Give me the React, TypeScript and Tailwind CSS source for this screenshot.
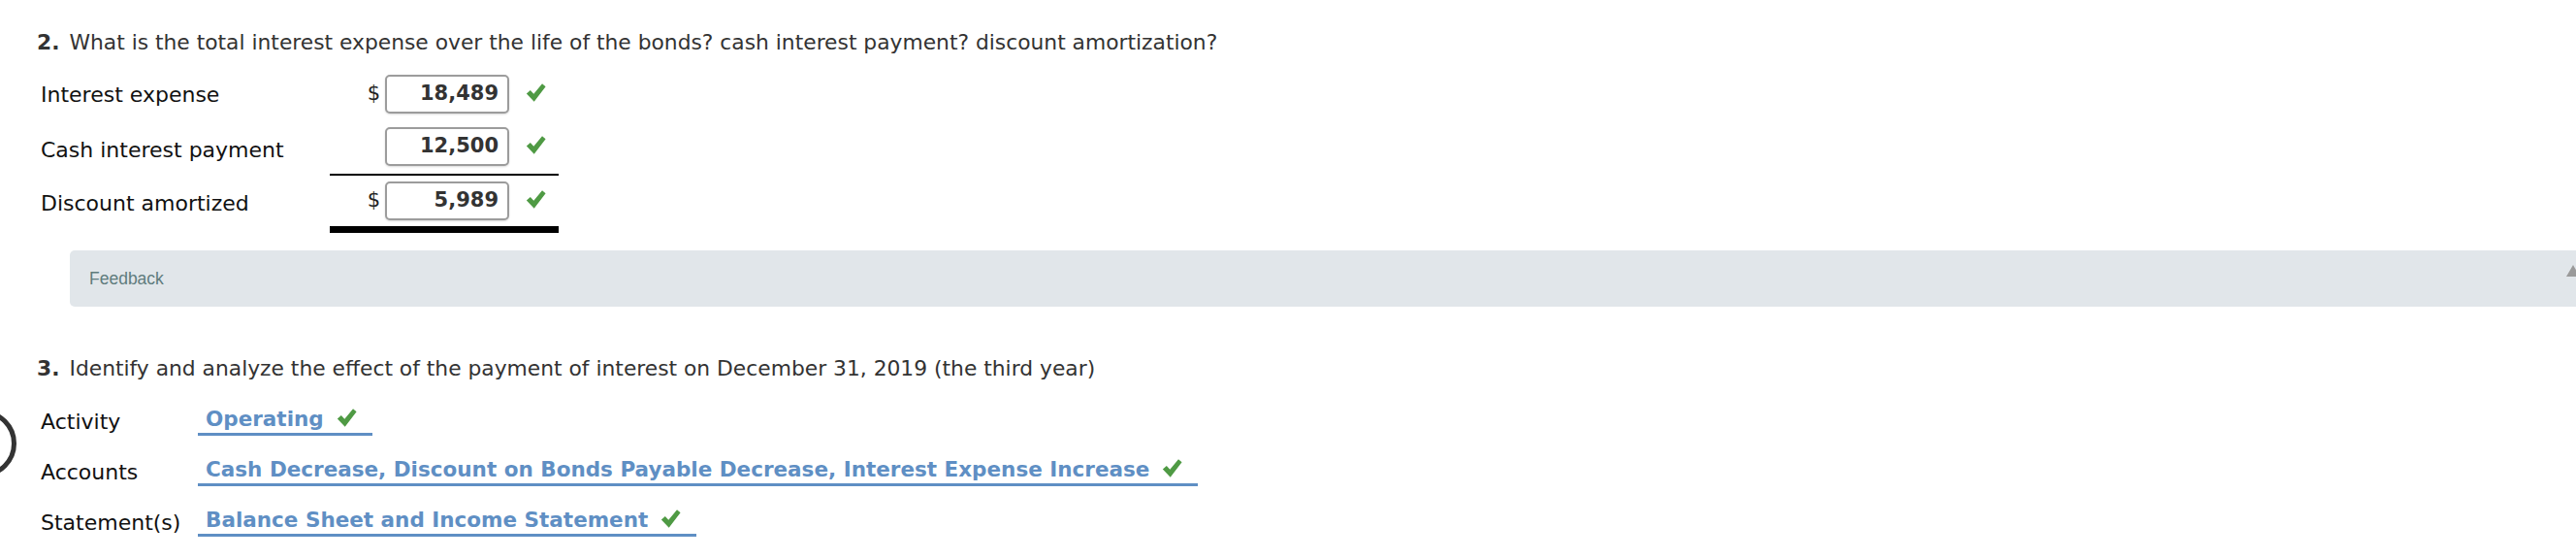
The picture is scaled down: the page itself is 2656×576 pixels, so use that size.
import React from 'react';

const font = "font-['DejaVu_Sans','Verdana',sans-serif]";

function Check({ className = '' }: { className?: string }) {
  return (
    <svg viewBox="0 0 20 20" className={`w-[21px] h-[21px] shrink-0 ${className}`}>
      <path d="M0.8 11 L4.6 7.6 L7.9 11.2 L16.2 1.2 L19.6 4 L8.3 18.8 Z" fill="#4f9a44" />
    </svg>
  );
}

type AmountRow = { label: string; value: string; dollar: boolean; line?: 'thin' | 'thick' };

const amounts: AmountRow[] = [
  { label: 'Interest expense', value: '18,489', dollar: true },
  { label: 'Cash interest payment', value: '12,500', dollar: false, line: 'thin' },
  { label: 'Discount amortized', value: '5,989', dollar: true, line: 'thick' },
];

const effects = [
  { label: 'Activity', value: 'Operating' },
  { label: 'Accounts', value: 'Cash Decrease, Discount on Bonds Payable Decrease, Interest Expense Increase' },
  { label: 'Statement(s)', value: 'Balance Sheet and Income Statement' },
];

function Amount({ row, index }: { row: AmountRow; index: number }) {
  // spacing per row: top margin, cell padding and label offset
  const outer = index === 0 ? 'mt-[15px]' : index === 1 ? 'mt-[6px]' : 'mt-0';
  const cell =
    row.line === 'thin'
      ? 'pt-[4px] pb-[8px] border-b-2 border-black'
      : row.line === 'thick'
        ? 'pt-[6px] pb-[6px] border-b-[7px] border-black'
        : 'pt-[4px] pb-[4px]';
  const labelTop = index === 0 ? 'mt-[4px]' : index === 1 ? 'mt-[7px]' : 'mt-[8px]';
  return (
    <div className={`flex items-start ${outer}`}>
      <div className={`w-[302px] pl-[4px] h-[40px] flex items-center text-[22px] text-[#111] ${labelTop}`}>
        {row.label}
      </div>
      <div className={`w-[236px] flex items-center ${cell}`}>
        <span className="w-[57px] pr-[5px] text-right text-[21px] text-[#222]">{row.dollar ? '$' : ''}</span>
        <div className="w-[128px] h-[40px] rounded-[5px] border-2 border-[#9c9c9c] shadow-[0_1px_2px_rgba(0,0,0,0.15)] bg-white flex items-center justify-end pr-[9px] text-[21px] font-bold text-[#333]">
          {row.value}
        </div>
        <Check className="ml-[17px] -mt-[4px]" />
      </div>
    </div>
  );
}

export default function App() {
  return (
    <div className={`relative w-[2656px] h-[576px] overflow-hidden bg-white ${font}`}>
      <div className="absolute left-[-55px] top-[422px] w-[72px] h-[70px] rounded-full border-[5px] border-[#333]" />

      <div className="pl-[38px] pt-[30px]">
        <p className="text-[21.8px] leading-[28px] text-[#333]">
          <span className="font-bold mr-[10px]">2.</span>What is the total interest expense over the life of the bonds? cash
          interest payment? discount amortization?
        </p>

        {amounts.map((r, i) => (
          <Amount key={r.label} row={r} index={i} />
        ))}
      </div>

      <div className="relative mt-[18px] ml-[72px] w-[2620px] h-[58px] rounded-[5px] bg-[#e1e6ea] flex items-center pl-[20px]">
        <span className="font-['Liberation_Sans',Arial,sans-serif] text-[17.5px] text-[#5f7c7d]">Feedback</span>
        <svg viewBox="0 0 14 12" className="absolute left-[2574px] top-[15px] w-[14px] h-[12px]">
          <path d="M0 12 L7 0 L14 12 Z" fill="#9a9a9a" />
        </svg>
      </div>

      <div className="pl-[38px] pt-[50px]">
        <p className="text-[21.8px] leading-[28px] text-[#333]">
          <span className="font-bold mr-[10px]">3.</span>Identify and analyze the effect of the payment of interest on
          December 31, 2019 (the third year)
        </p>

        <div className="mt-[25px] flex flex-col gap-[22px]">
          {effects.map((e) => (
            <div key={e.label} className="flex items-start">
              <div className="w-[166px] pl-[4px] pt-[3px] text-[22px] leading-[26px] text-[#111]">{e.label}</div>
              <div className="flex items-center pl-[8px] pr-[16px] pb-[1px] border-b-[3px] border-[#5f8fc4]">
                <span className="text-[21.5px] leading-[26px] font-bold text-[#5f8fc4]">{e.value}</span>
                <Check className="ml-[13px] -mt-[3px]" />
              </div>
            </div>
          ))}
        </div>
      </div>
    </div>
  );
}
